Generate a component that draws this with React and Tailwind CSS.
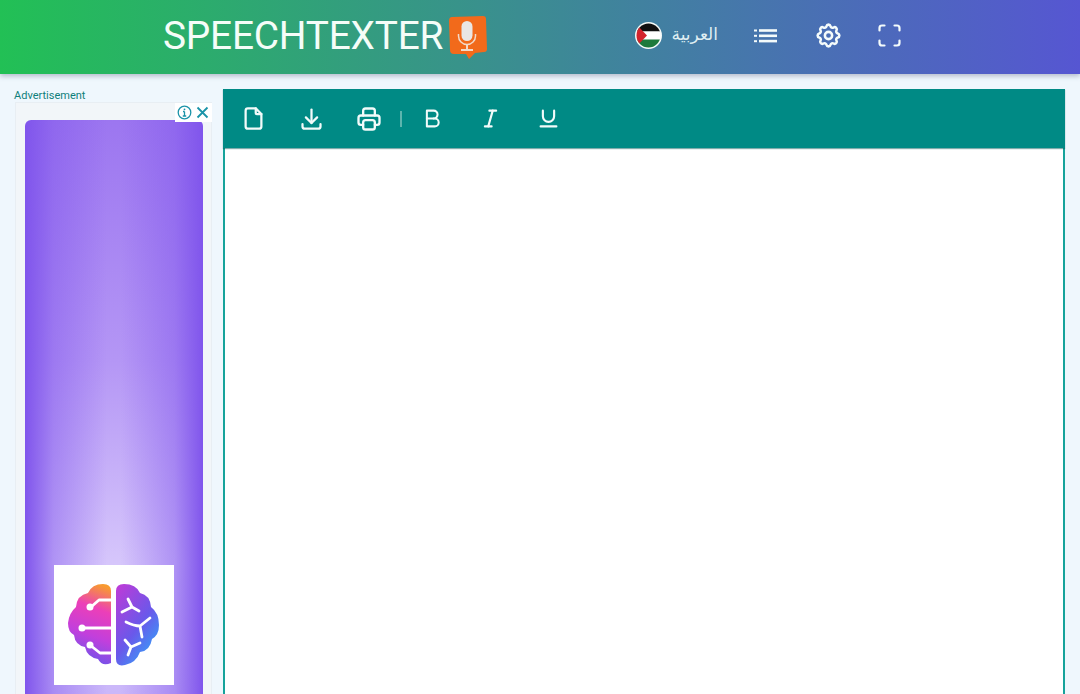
import React from "react";
import { TbFile, TbDownload, TbPrinter, TbBold, TbItalic, TbUnderline, TbSettings } from "react-icons/tb";

function Logo() {
  return (
    <svg width="40" height="44" viewBox="0 0 40 44" className="ml-[5px] mt-[4px]">
      <path d="M4 1 L35 0 Q38 0 38 3 L39 33 Q39 36 36 36 L27 37 L21 43 L18 38 L6 38 Q2 38 2 34 L1 5 Q1 1 4 1 Z" fill="#f26a1b" />
      <rect x="13.500" y="5" width="11" height="20" rx="5.500" fill="#e9e6e4" />
      <path d="M10.500 18 v2 a8.500 8.500 0 0 0 17 0 v-2" fill="none" stroke="#f3d9c8" strokeWidth="1.500" />
      <path d="M19 29 v4 M13 34 h12" stroke="#f3d9c8" strokeWidth="2" />
    </svg>
  );
}

function Flag() {
  return (
    <svg width="27" height="27" viewBox="0 0 27 27">
      <defs>
        <clipPath id="flagclip"><circle cx="13.500" cy="13.500" r="12" /></clipPath>
      </defs>
      <circle cx="13.500" cy="13.500" r="13.500" fill="#f5faf8" />
      <g clipPath="url(#flagclip)">
        <rect width="27" height="9.500" fill="#111" />
        <rect y="9.500" width="27" height="8" fill="#fff" />
        <rect y="17.500" width="27" height="10" fill="#1d7a3c" />
        <path d="M0 1 L12 13.500 L0 26 Z" fill="#d3232c" />
      </g>
    </svg>
  );
}

function ListIcon() {
  return (
    <svg width="24" height="16" viewBox="0 0 24 16" fill="#f4fbfb">
      <rect x="0" y="1.500" width="3" height="2" />
      <rect x="0" y="6.800" width="3" height="2" />
      <rect x="0" y="12.200" width="3" height="2" />
      <rect x="5" y="1.200" width="18" height="2.600" />
      <rect x="5" y="6.500" width="18" height="2.600" />
      <rect x="5" y="11.800" width="18" height="2.600" />
    </svg>
  );
}

function FullIcon() {
  return (
    <svg width="23" height="23" viewBox="0 0 23 23" fill="none" stroke="#f4fbfb" strokeWidth="2.200" strokeLinecap="round" strokeLinejoin="round">
      <path d="M1.500 6.500 V4 Q1.500 1.500 4 1.500 H6.500" />
      <path d="M16.500 1.500 H19 Q21.500 1.500 21.500 4 V6.500" />
      <path d="M21.500 16.500 V19 Q21.500 21.500 19 21.500 H16.500" />
      <path d="M6.500 21.500 H4 Q1.500 21.500 1.500 19 V16.500" />
    </svg>
  );
}

function Brain() {
  return (
    <svg width="92" height="86" viewBox="0 0 92 86" className="mt-[2px]">
      <defs>
        <linearGradient id="brainL" x1="0.700" y1="0" x2="0.500" y2="1">
          <stop offset="0" stopColor="#f89a30" />
          <stop offset="0.300" stopColor="#ec3fb8" />
          <stop offset="0.650" stopColor="#c23fdc" />
          <stop offset="1" stopColor="#6a55ea" />
        </linearGradient>
        <linearGradient id="brainR" x1="0.100" y1="0" x2="0.800" y2="1">
          <stop offset="0" stopColor="#bb3cd8" />
          <stop offset="0.550" stopColor="#6a58ea" />
          <stop offset="1" stopColor="#30a8fa" />
        </linearGradient>
      </defs>
      <path d="M43 8 Q43 1 35 1 Q24 1 20 10 Q9 12 8 24 Q1 30 0 40 Q0 49 6 52 Q7 62 17 64 Q19 74 30 76 Q34 84 43 80 Z" fill="url(#brainL)" />
      <path d="M48 8 Q48 1 56 1 Q68 1 72 10 Q82 12 83 24 Q91 30 91 42 Q91 52 84 56 Q82 68 72 69 Q68 80 57 82 Q48 84 48 76 Z" fill="url(#brainR)" />
      <g fill="none" stroke="#fff" strokeWidth="2.800" strokeLinecap="round" strokeLinejoin="round">
        <path d="M43 17 H31 L23 24" />
        <path d="M43 45 H14" />
        <path d="M43 70 H32 L22 62" />
        <path d="M60 16 L64 24 L54 29 M64 24 L71 28" />
        <path d="M58 39 Q66 43 72 43 L82 35 M72 43 L74 54" />
        <path d="M57 57 L63 64 L72 60 M63 64 L60 72" />
      </g>
      <circle cx="22" cy="24" r="3.500" fill="#fff" />
      <circle cx="14" cy="45" r="3.500" fill="#fff" />
      <circle cx="22" cy="62" r="3.500" fill="#fff" />
    </svg>
  );
}

function Tool({ children }) {
  return <div className="flex w-[58px] items-center justify-center text-[#f2fbfa]">{children}</div>;
}

export default function App() {
  return (
    <div className="flex h-[694px] flex-col overflow-hidden bg-[#eff7fd] font-['Roboto',sans-serif]">
      <header className="relative z-10 flex h-[74px] shrink-0 items-center bg-[linear-gradient(90deg,#22c055_0%,#5656d2_100%)] pb-[3px] pl-[163px] shadow-[0_2px_5px_rgba(60,70,110,0.35)]">
        <div className="flex w-[440px] items-center">
          <span className="mt-[2px] text-[38.800px] font-normal leading-none tracking-[-0.2px] text-[#f5fdf8]">SPEECHTEXTER</span>
          <Logo />
        </div>
        <div className="ml-[32px] flex items-center">
          <Flag />
          <span className="mb-[5px] ml-[11px] w-[45px] text-[17px] leading-none text-[#dfeef2] font-['Noto_Sans','DejaVu_Sans',sans-serif]" dir="rtl">العربية</span>
        </div>
        <div className="ml-[36px] flex items-center"><ListIcon /></div>
        <div className="ml-[36px] flex items-center text-[#f4fbfb]"><TbSettings size={29} strokeWidth={2.100} /></div>
        <div className="ml-[35px] flex items-center"><FullIcon /></div>
      </header>

      <main className="flex min-h-0 flex-1 pr-[15px]">
        <aside className="w-[223px] shrink-0 pl-[14px] pt-[14px]">
          <div className="translate-y-[1px] text-[11px] leading-[14px] text-[#0f7f7b]">Advertisement</div>
          <div className="relative ml-[1px] mr-[11px] h-[600px] border-x border-t border-[#e8eef3] bg-[#f2f6f9] pl-[9px] pr-[8px] pt-[17px]">
            <div className="absolute -right-[1px] top-0 flex h-[19px] items-center gap-[3px] bg-white pl-[2px] pr-[2px] text-[#1a93a8]">
              <svg width="15" height="15" viewBox="0 0 15 15" fill="none" stroke="currentColor">
                <circle cx="7.500" cy="7.500" r="6.300" strokeWidth="1.300" />
                <path d="M7.500 6.500 V11 M5.800 11 H9.200 M6 6.500 H7.500" strokeWidth="1.300" />
                <circle cx="7.500" cy="4.300" r="0.900" fill="currentColor" stroke="none" />
              </svg>
              <svg width="15" height="15" viewBox="0 0 15 15" fill="none" stroke="currentColor" strokeWidth="1.800">
                <path d="M2.500 2.500 L12.500 12.500 M12.500 2.500 L2.500 12.500" />
              </svg>
            </div>
            <div className="flex h-[600px] flex-col items-center rounded-t-[6px] bg-[linear-gradient(90deg,#8055ec_0%,rgba(128,85,236,0.45)_16%,rgba(128,85,236,0)_46%,rgba(128,85,236,0)_54%,rgba(128,85,236,0.45)_84%,#8055ec_100%),linear-gradient(180deg,#9c76f0_0%,#b496f5_40%,#d6c6fb_74%,#c8b4f9_100%)] pt-[445px]">
              <div className="flex h-[120px] w-[120px] items-center justify-center bg-white">
                <Brain />
              </div>
            </div>
          </div>
        </aside>

        <section className="mt-[15px] h-[640px] min-w-0 flex-1 border-x-2 border-[#16a39b] bg-white">
          <div className="-mx-[2px] flex h-[59px] items-center bg-[#008a85] pl-[1px] shadow-[0_1px_1px_rgba(0,90,90,0.5)]">
            <Tool><TbFile size={27} strokeWidth={2} /></Tool>
            <Tool><TbDownload size={27} strokeWidth={2} /></Tool>
            <Tool><TbPrinter size={28} strokeWidth={2} /></Tool>
            <div className="ml-[2px] mr-[1px] h-[16px] w-[2px] bg-[#5db5ae]" />
            <Tool><TbBold size={27} strokeWidth={1.800} /></Tool>
            <Tool><TbItalic size={27} strokeWidth={1.900} /></Tool>
            <Tool><TbUnderline size={27} strokeWidth={1.900} /></Tool>
          </div>
        </section>
      </main>
    </div>
  );
}
